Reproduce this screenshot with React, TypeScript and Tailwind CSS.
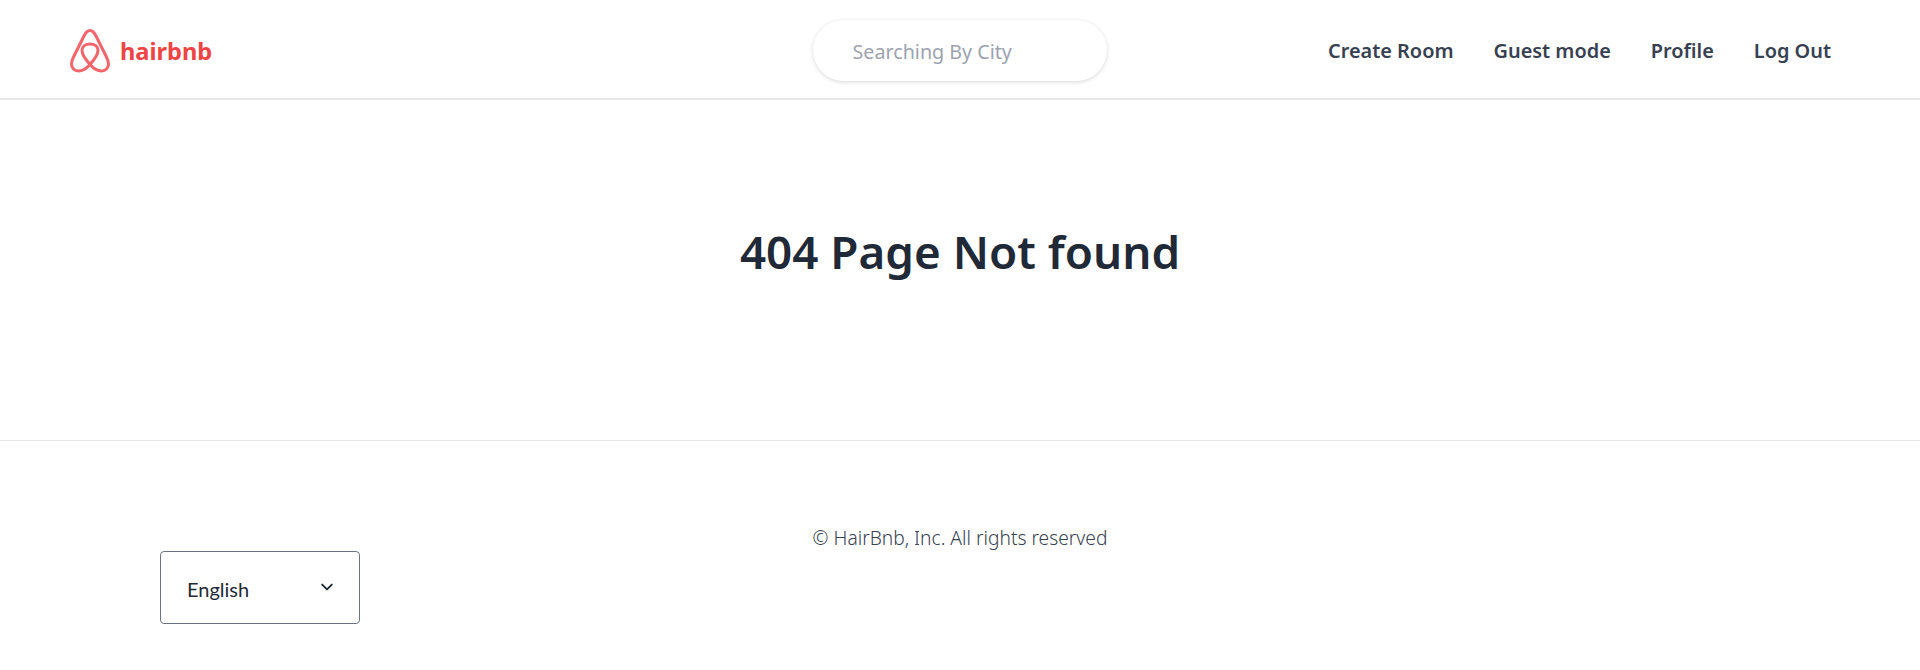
import React from "react";

const font = "font-['Noto_Sans','Noto_Sans_CJK_KR',sans-serif]";

function Logo() {
  return (
    <svg viewBox="0 0 40 44" className="w-[40px] h-[44px]" fill="none" stroke="#f2656b" strokeWidth="3" strokeLinecap="round" strokeLinejoin="round">
      <path d="M20 35.5C16 31 12 25.5 12 21.5C12 17.5 15.5 15 20 15C24.5 15 28 17.5 28 21.5C28 25.5 24 31 20 35.5C16.5 39.5 12.5 42 8.5 42C4.5 42 1.5 39 1.5 35C1.5 32.5 2.5 30 4 27L14 7C16 3 17.5 1.5 20 1.5C22.5 1.5 24 3 26 7L36 27C37.5 30 38.5 32.5 38.5 35C38.5 39 35.5 42 31.5 42C27.5 42 23.5 39.5 20 35.5Z" />
    </svg>
  );
}

export default function App() {
  return (
    <div className={`${font} min-h-[670px] bg-white`}>
      <header className="h-[100px] border-b-2 border-[#e5e5ea] flex items-center justify-between pl-[70px] pr-[89px]">
        <a className="flex items-center gap-[10px] w-[500px] mt-[4px]">
          <Logo />
          <span className="text-[23.6px] font-bold text-[#ef4444] leading-none mt-[2px]">hairbnb</span>
        </a>
        <div className="w-[294px] h-[61px] mt-[3px] ml-[38px] pt-[2px] rounded-full bg-white shadow-[0_1px_4px_rgba(0,0,0,0.16)] flex items-center pl-[40px] text-[19.7px] text-[#9ca3af]">
          Searching By City
        </div>
        <nav className="flex items-center gap-[40px] text-[19.9px] font-semibold text-[#374151] w-[520px] justify-end mt-[4px]">
          <a>Create Room</a>
          <a>Guest mode</a>
          <a>Profile</a>
          <a>Log Out</a>
        </nav>
      </header>
      <main className="h-[341px] flex justify-center pt-[126px] border-b border-[#e5e7eb]">
        <h1 className="text-[45.8px] leading-[50px] font-semibold text-[#1f2937]">404 Page Not found</h1>
      </main>
      <footer className="relative h-[229px]">
        <p className="text-center pt-[83px] text-[19.2px] font-light leading-[28px] text-[#374151]">© HairBnb, Inc. All rights reserved</p>
        <div className="absolute left-[160px] top-[110px] w-[200px] h-[73px] border border-[#6b7280] rounded-[4px] flex items-center justify-between pl-[26px] pr-[24px] text-[20px] text-[#1f2937]">
          <span className="font-['Lato',sans-serif] mt-[2px]">English</span>
          <svg viewBox="0 0 20 20" className="w-[16px] h-[16px] mb-[1px]" fill="none" stroke="#1f2937" strokeWidth="2.4" strokeLinecap="round" strokeLinejoin="round"><path d="M4 7l6 6 6-6" /></svg>
        </div>
      </footer>
    </div>
  );
}
